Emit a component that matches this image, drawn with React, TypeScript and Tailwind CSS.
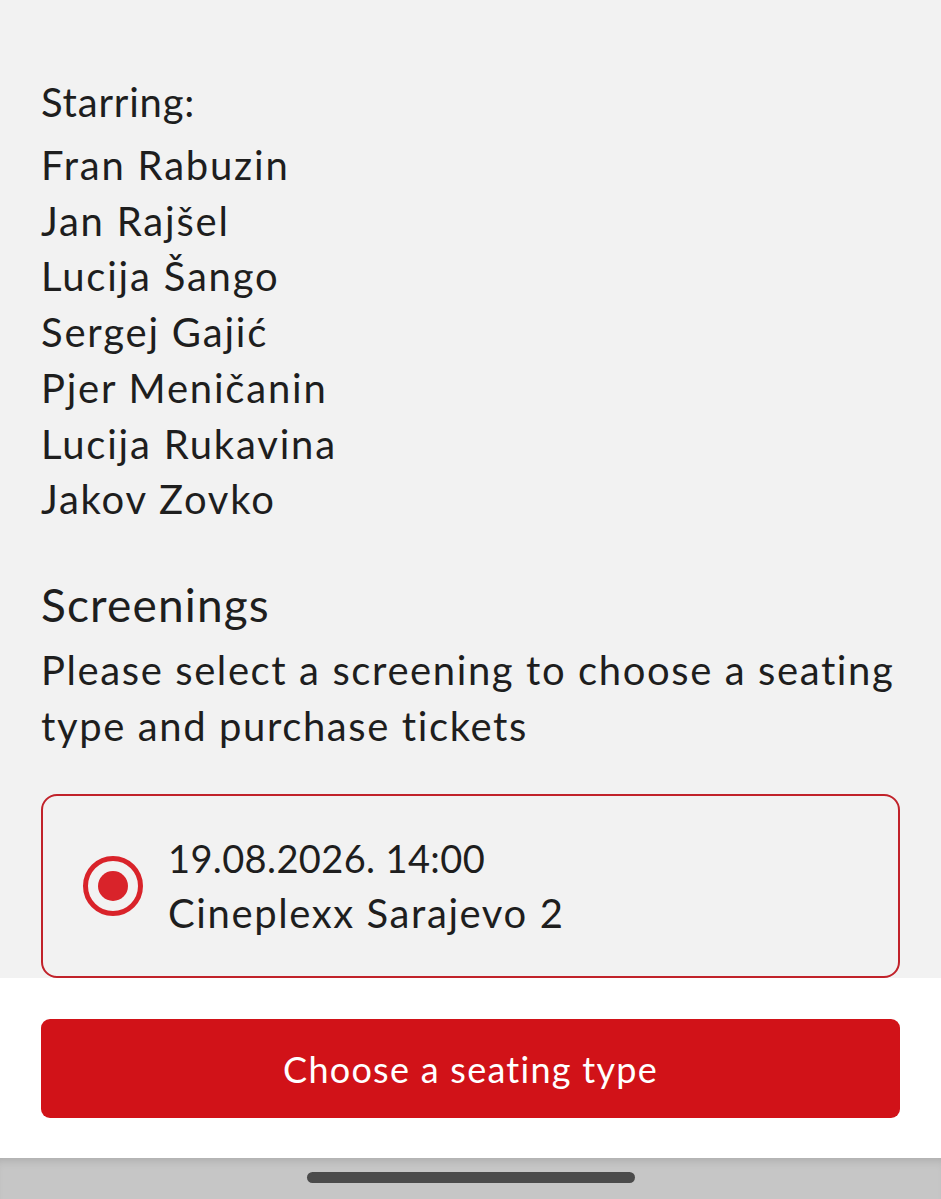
import React from "react";

const cast = [
  "Fran Rabuzin",
  "Jan Rajšel",
  "Lucija Šango",
  "Sergej Gajić",
  "Pjer Meničanin",
  "Lucija Rukavina",
  "Jakov Zovko",
];

export default function App() {
  return (
    <div
      className="flex h-[1199px] w-[941px] flex-col overflow-hidden bg-[#f2f2f2] text-[#1e1e1e]"
      style={{ fontFamily: "Lato, 'Noto Sans', sans-serif" }}
    >
      {/* Scrolling content */}
      <div className="flex-1 overflow-hidden px-[41px] pt-[78px]">
        <p className="text-[40px] leading-[48px] tracking-[0.02em]">Starring:</p>
        <ul className="mt-[12px]">
          {cast.map((name) => (
            <li key={name} className="text-[40px] leading-[55.7px] tracking-[0.045em]">
              {name}
            </li>
          ))}
        </ul>

        <h2 className="mt-[49px] text-[46px] leading-[56px] tracking-[0.025em]">Screenings</h2>
        <p className="mt-[9px] text-[40px] leading-[56px] tracking-[0.04em]">
          Please select a screening to choose a seating type and purchase tickets
        </p>

        <div className="mt-[40px] flex h-[184px] items-center gap-[25px] rounded-[16px] border-2 border-[#c1222a] px-[40px]">
          <span className="flex h-[60px] w-[60px] shrink-0 items-center justify-center rounded-full border-[5px] border-[#d9232a]">
            <span className="h-[30px] w-[30px] rounded-full bg-[#d9232a]" />
          </span>
          <div>
            <p className="text-[38px] leading-[55px] tracking-[0.01em]">19.08.2026. 14:00</p>
            <p className="text-[40px] leading-[55px] tracking-[0.04em]">Cineplexx Sarajevo 2</p>
          </div>
        </div>
      </div>

      {/* Action panel */}
      <div className="h-[180px] shrink-0 bg-white px-[41px] pt-[41px]">
        <button className="flex h-[99px] w-full items-center justify-center rounded-[9px] bg-[#d11218] text-[36px] tracking-[0.035em] text-white">
          Choose a seating type
        </button>
      </div>

      {/* System nav bar */}
      <div className="flex h-[41px] shrink-0 items-start justify-center bg-[#c6c6c6] pt-[14px] shadow-[inset_0_8px_10px_-6px_rgba(0,0,0,0.15)]">
        <span className="h-[11px] w-[328px] rounded-full bg-[#4b4b4b]" />
      </div>
    </div>
  );
}
